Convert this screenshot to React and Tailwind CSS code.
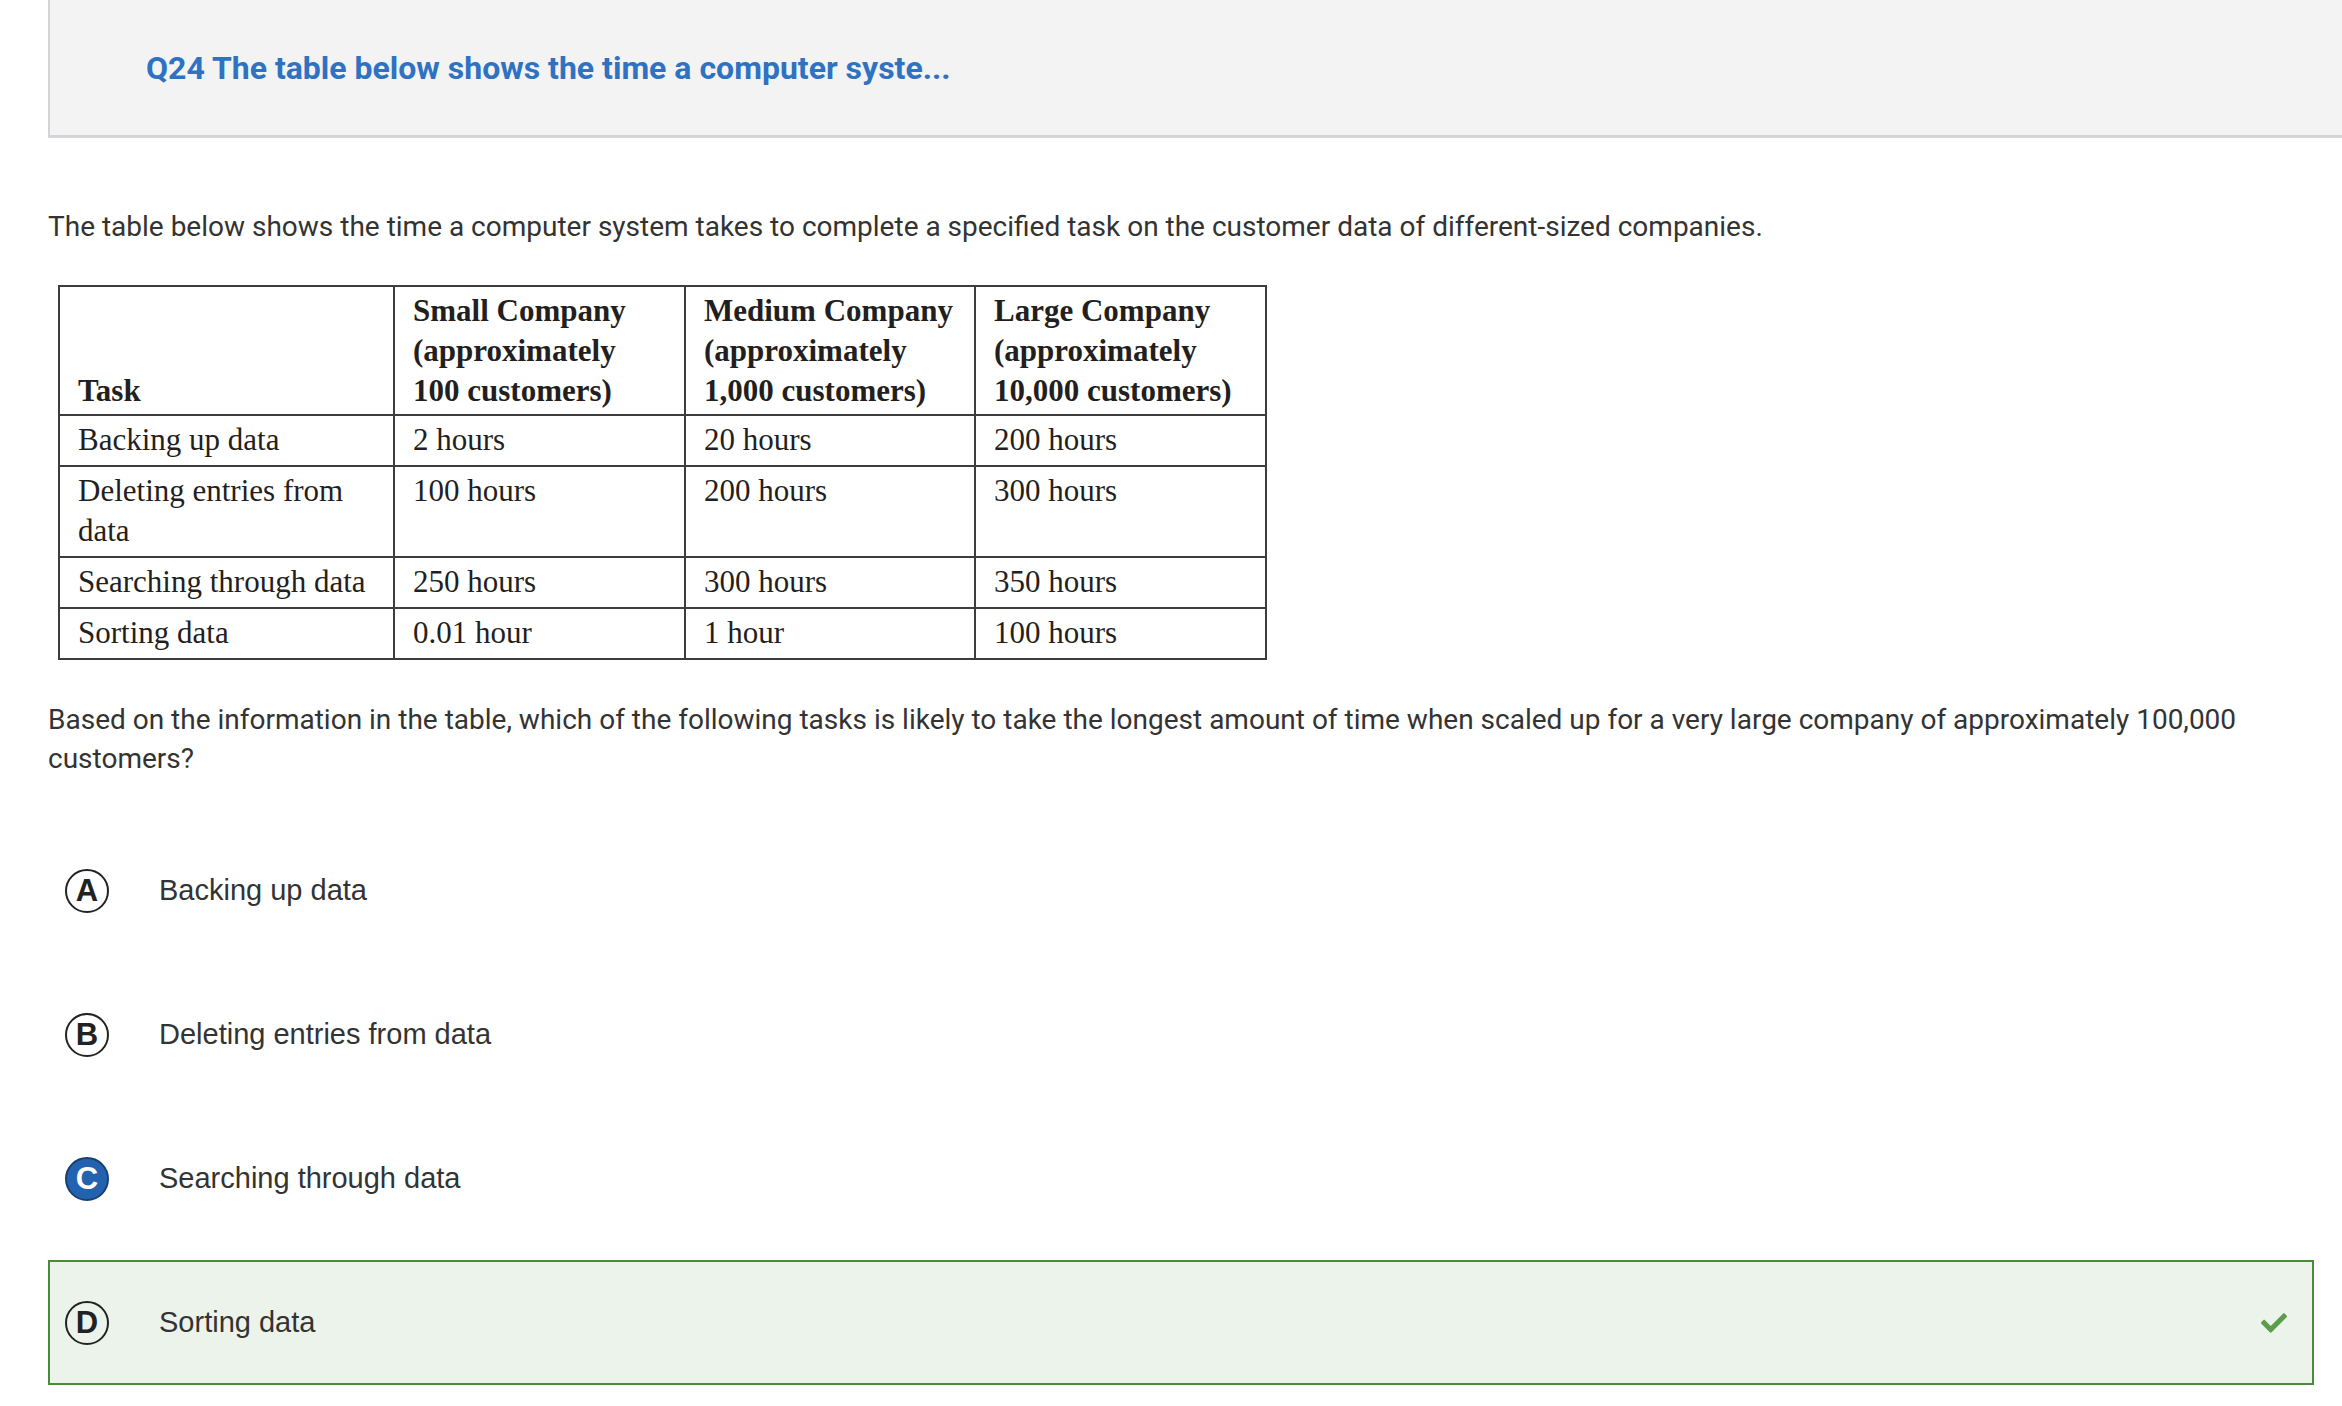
import React from 'react'
import { FaCheck } from 'react-icons/fa'

const rows = [
  ['Backing up data', '2 hours', '20 hours', '200 hours'],
  ['Deleting entries from data', '100 hours', '200 hours', '300 hours'],
  ['Searching through data', '250 hours', '300 hours', '350 hours'],
  ['Sorting data', '0.01 hour', '1 hour', '100 hours'],
]

const options = [
  { letter: 'A', text: 'Backing up data' },
  { letter: 'B', text: 'Deleting entries from data' },
  { letter: 'C', text: 'Searching through data', selected: true },
  { letter: 'D', text: 'Sorting data', correct: true },
]

function Letter({ letter, selected }) {
  return (
    <div
      className={`w-[44px] h-[44px] shrink-0 rounded-full border-2 flex items-center justify-center text-[31px] font-bold leading-none font-['Liberation_Sans',Arial,sans-serif] ${selected ? 'bg-[#2362ae] border-[#1b3f70] text-white' : 'border-[#222] text-[#222]'}`}
    >
      {letter}
    </div>
  )
}

export default function App() {
  return (
    <div className="min-h-screen bg-white font-['Roboto',sans-serif] text-[#333]">
      {/* Question header */}
      <div className="pl-12">
        <div className="h-[138px] bg-[#f3f3f3] border-l-2 border-b-[3px] border-[#d4d3d8] flex items-center pl-[96px]">
          <h1 className="text-[32px] font-bold text-[#2f72c2]">Q24 The table below shows the time a computer syste...</h1>
        </div>
      </div>

      <div className="pl-12 pr-[28px]">
        <p className="mt-[70px] text-[28px] leading-[38px]">
          The table below shows the time a computer system takes to complete a specified task on the customer data of different-sized companies.
        </p>

        {/* Data table */}
        <table className="mt-[39px] ml-[10px] border-collapse border-2 border-[#3d3d3d] font-['Liberation_Serif','Times_New_Roman',serif] text-[31px] leading-[40px] text-[#231f20]">
          <thead>
            <tr>
              <th className="w-[335px] border-2 border-[#3d3d3d] px-[18px] pt-[4px] pb-[3px] text-left align-bottom font-semibold">Task</th>
              <th className="w-[291px] border-2 border-[#3d3d3d] px-[18px] pt-[4px] pb-[3px] text-left align-bottom font-semibold">Small Company<br />(approximately<br />100 customers)</th>
              <th className="w-[290px] border-2 border-[#3d3d3d] px-[18px] pt-[4px] pb-[3px] text-left align-bottom font-semibold">Medium Company<br />(approximately<br />1,000 customers)</th>
              <th className="w-[291px] border-2 border-[#3d3d3d] px-[18px] pt-[4px] pb-[3px] text-left align-bottom font-semibold">Large Company<br />(approximately<br />10,000 customers)</th>
            </tr>
          </thead>
          <tbody>
            {rows.map((r, i) => (
              <tr key={i}>
                {r.map((c, j) => (
                  <td key={j} className="border-2 border-[#3d3d3d] px-[18px] pt-[4px] pb-[5px] align-top">{c}</td>
                ))}
              </tr>
            ))}
          </tbody>
        </table>

        <p className="mt-[40px] text-[28px] leading-[39px]">
          Based on the information in the table, which of the following tasks is likely to take the longest amount of time when scaled up for a very large company of approximately 100,000 customers?
        </p>

        {/* Answer options */}
        <div className="mt-[50px] flex flex-col gap-[19px] pb-[20px]">
          {options.map((o) => (
            <div
              key={o.letter}
              className={`h-[125px] flex items-center pl-[15px] pr-[25px] border-2 ${o.correct ? 'bg-[#ebf3eb] border-[#4a8a3d]' : 'border-transparent'}`}
            >
              <Letter letter={o.letter} selected={o.selected} />
              <span className="ml-[50px] flex-1 text-[29px] font-['Liberation_Sans',Arial,sans-serif] text-[#333]">{o.text}</span>
              {o.correct && <FaCheck className="text-[#5a9d4b] w-[26px] h-[26px]" />}
            </div>
          ))}
        </div>
      </div>
    </div>
  )
}
